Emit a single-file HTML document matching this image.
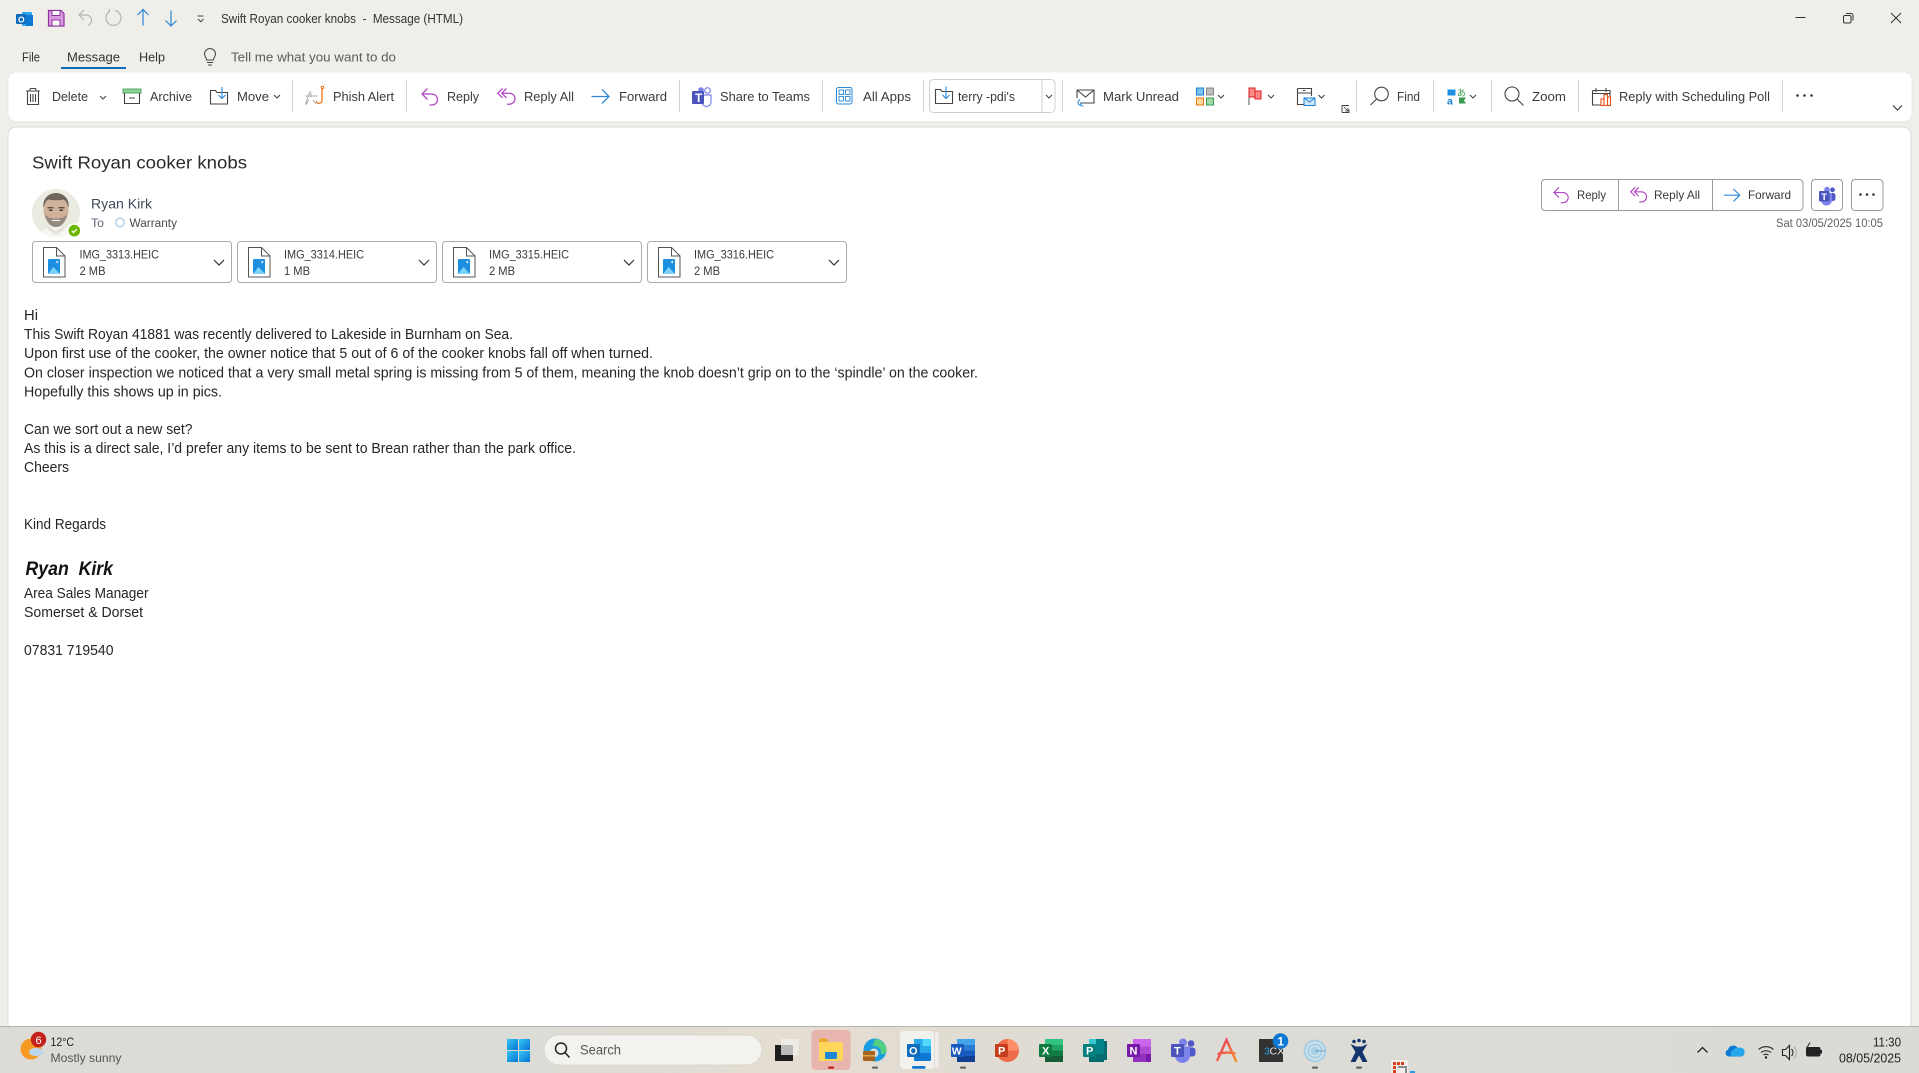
<!DOCTYPE html>
<html lang="en">
<head>
<meta charset="utf-8">
<title>Swift Royan cooker knobs - Message (HTML)</title>
<style>
html,body{margin:0;padding:0;width:1919px;height:1073px;overflow:hidden;background:#f0eee9}
svg{display:block;position:absolute;left:0;top:0}
text{font-family:"Liberation Sans",sans-serif;white-space:pre}
.t{font-size:12.5px;fill:#3a3a3a}
.m{font-size:12.5px;fill:#333}
.b{font-size:14.6px;fill:#262626}
.h{font-size:12px;fill:#3a3a3a}
.s{font-size:11.5px;fill:#4a4a4a}
.g{stroke:#d5d3ce;stroke-width:1}
.i{fill:none;stroke:#444;stroke-width:1.1}
.c{fill:none;stroke:#555;stroke-width:1.1}
</style>
</head>
<body>
<svg width="1919" height="1073" viewBox="0 0 1919 1073" xmlns="http://www.w3.org/2000/svg">
<defs>
<linearGradient id="tb" x1="0" x2="1" y1="0" y2="0">
<stop offset="0" stop-color="#dcdbd6"/><stop offset=".27" stop-color="#dcdcd6"/><stop offset=".42" stop-color="#e5ddd1"/><stop offset=".6" stop-color="#dcdbd5"/><stop offset="1" stop-color="#dbdbd6"/>
</linearGradient>
<linearGradient id="win" x1="0" x2="1" y1="0" y2="1"><stop offset="0" stop-color="#36c6f4"/><stop offset="1" stop-color="#0674d4"/></linearGradient>
<linearGradient id="acr" x1="0" x2="1" y1="0" y2="1"><stop offset="0" stop-color="#e8306a"/><stop offset="1" stop-color="#f79420"/></linearGradient>
<g id="rp" fill="none" stroke="#b146c2" stroke-width="1.25"><path d="M6.5 .5 1 6l5.500 5.500"/><path d="M1 6h10a5.500 5.500 0 0 1 0 11H8.500"/></g>
<g id="ra" fill="none" stroke="#b146c2" stroke-width="1.25"><path d="M5.500 .5 .8 5.200l4.700 4.700"/><path d="M9.500 .5 4.800 5.200l4.700 4.700"/><path d="M5 5.200h7.500a5.500 5.500 0 0 1 0 11H10"/></g>
<g id="fw" fill="none" stroke="#2b88d8" stroke-width="1.25"><path d="M.5 8h17.500"/><path d="M11 1l7 7-7 7"/></g>
<g id="tm"><circle cx="15.500" cy="3.500" r="2.800" fill="none" stroke="#7b83eb" stroke-width="1.200"/><path d="M10 8h9v7a4.500 4.500 0 0 1-9 0z" fill="none" stroke="#7b83eb" stroke-width="1.200"/><circle cx="9" cy="3" r="2.800" fill="#7b83eb"/><rect x="0" y="4" width="12" height="13" rx="1" fill="#4b53bc"/><text x="3" y="15" style="font:bold 12px 'Liberation Sans',sans-serif;fill:#fff">T</text></g>
<g id="tms"><circle cx="13.500" cy="2.800" r="2.400" fill="#5059c9"/><rect x="9" y="6" width="7.500" height="8" rx="2.500" fill="#5059c9"/><circle cx="8" cy="2.500" r="2.800" fill="#7b83eb"/><path d="M2 6h11v7a5.500 5.500 0 0 1-11 0z" fill="#7b83eb"/><rect x="0" y="4" width="10.500" height="10.500" rx="1" fill="#4b53bc"/><text x="2.300" y="12.800" style="font:bold 9.500px 'Liberation Sans',sans-serif;fill:#fff">T</text></g>
<g id="ch"><path d="M0 0l3 3 3-3" fill="none" stroke="#444" stroke-width="1.100"/></g>
<g id="file"><path d="M.5.500h13l8.500 8.500v21H.5z" fill="#fff" stroke="#555" stroke-width="1"/><path d="M13.500.5V9H22" fill="none" stroke="#555" stroke-width="1"/><rect x="5" y="12" width="12" height="15" rx="1" fill="#1d8fe1"/><path d="M5 27l5.500-7 6.500 7z" fill="#7fd3f7"/><path d="M13 15h2.500M14.200 13.800v2.500" stroke="#fff" stroke-width=".8"/></g>
</defs>

<!-- backdrop -->
<rect width="1919" height="1073" fill="#f0eee9"/>

<!-- title bar: quick access -->
<rect x="22" y="12" width="10" height="14" rx="1" fill="#28a8ea"/><rect x="26" y="15" width="7" height="11" fill="#0f78d4"/><rect x="16" y="14" width="10" height="10" rx="1" fill="#0f6cbd"/><text x="18" y="22.500" style="font:bold 8.500px 'Liberation Sans',sans-serif;fill:#fff">O</text>
<path d="M48.500 10.500H61l3 3v12.500H48.500z" fill="#d99be0" stroke="#8e2f9e" stroke-width="1.200"/><rect x="52" y="10.500" width="8" height="5" fill="#fff" stroke="#8e2f9e"/><rect x="52" y="20" width="8" height="6" fill="#fff" stroke="#8e2f9e"/>
<g fill="none" stroke="#b5b3ae" stroke-width="1.200"><path d="M84 10l-5 5 5 5"/><path d="M79 15h8a5.500 5.500 0 0 1 1 10.500"/><path d="M115 10.500a7.500 7.500 0 1 1-5.500 1l-.5-2.500"/></g>
<g fill="none" stroke="#2b88d8" stroke-width="1.200"><path d="M143 25.500V10"/><path d="M137.500 15l5.500-5.500 5.500 5.500"/><path d="M171 10.500V26"/><path d="M165.500 20.500l5.500 5.500 5.500-5.500"/></g>
<path d="M197.500 16h6" stroke="#444"/><path d="M198 19l2.800 2.800 2.800-2.800" fill="none" stroke="#444"/>
<text class="m" x="221" y="23" textLength="242" lengthAdjust="spacingAndGlyphs">Swift Royan cooker knobs  -  Message (HTML)</text>

<!-- window controls -->
<path d="M1795.500 17.500h10" stroke="#333" stroke-width="1"/>
<rect x="1843.500" y="15.500" width="7.500" height="7.500" rx="1.500" fill="none" stroke="#333"/><path d="M1846 13.500h5a2 2 0 0 1 2 2v5" fill="none" stroke="#333"/>
<path d="M1891 13l10 10M1901 13l-10 10" stroke="#333" stroke-width="1"/>

<!-- menu -->
<text class="m" x="22" y="61.500" textLength="18" lengthAdjust="spacingAndGlyphs">File</text>
<text class="m" x="67" y="61.500" textLength="53" lengthAdjust="spacingAndGlyphs">Message</text>
<rect x="61" y="67" width="65" height="2" fill="#0f6cbd"/>
<text class="m" x="139" y="61.500" textLength="26" lengthAdjust="spacingAndGlyphs">Help</text>
<path d="M206.500 60c0-2.500-2-3.500-2-6a5.500 5.500 0 0 1 11 0c0 2.500-2 3.500-2 6zM207 62.500h6M208 65h4" fill="none" stroke="#444" stroke-width="1"/>
<text class="t" x="231" y="61.500" textLength="165" lengthAdjust="spacingAndGlyphs" style="fill:#5c5c5c">Tell me what you want to do</text>

<!-- ribbon -->
<rect x="8" y="72" width="1904" height="49" rx="8" fill="#fff"/>
<rect x="8" y="72" width="1904" height="50" rx="8" fill="none" stroke="#e5e3de" stroke-width=".6"/>
<g class="g">
<path d="M292.500 80v32M406.500 80v32M679.500 80v32M822.500 80v32M923.500 80v32M1062.500 80v32M1356.500 80v32M1433.500 80v32M1491.500 80v32M1578.500 80v32M1782.500 80v32"/>
</g>

<!-- delete -->
<path d="M26 91h14M30 91v-1.500a1 1 0 0 1 1-1h4a1 1 0 0 1 1 1V91M27.500 91v13.500h11V91M30.500 94v8M33 94v8M35.500 94v8" class="i"/>
<text class="t" x="52" y="101" textLength="36" lengthAdjust="spacingAndGlyphs">Delete</text>
<use href="#ch" x="100" y="96"/>
<!-- archive -->
<rect x="123" y="89" width="18" height="4" fill="#8cd39a" stroke="#3a9a4f" stroke-width=".8"/>
<path d="M124.500 93v10.500h15V93M129 98h6" class="i"/>
<text class="t" x="150" y="101" textLength="42" lengthAdjust="spacingAndGlyphs">Archive</text>
<!-- move -->
<path d="M210.500 90.500h5l1.500 2h10.500v11.500h-17z" class="i"/><path d="M222 87v11M218.500 95l3.500 3.500 3.500-3.500" fill="none" stroke="#2b88d8" stroke-width="1.100"/>
<text class="t" x="237" y="101" textLength="32" lengthAdjust="spacingAndGlyphs">Move</text>
<use href="#ch" x="274" y="95"/>
<!-- phish -->
<g fill="none" stroke="#aaa" stroke-width="1"><path d="M305.500 104l3-9 2-4M305.500 96h12M309 100l-3.500 5M311 93v4M313 100l3 4"/></g>
<path d="M322 88.500v11a3 3 0 0 1-6 1.500" fill="none" stroke="#e8741c" stroke-width="1.300"/><circle cx="322.500" cy="87.500" r="1.300" fill="none" stroke="#e8741c"/>
<text class="t" x="333" y="101" textLength="61" lengthAdjust="spacingAndGlyphs">Phish Alert</text>
<!-- reply -->
<use href="#rp" x="421" y="88"/>
<text class="t" x="447" y="101" textLength="32" lengthAdjust="spacingAndGlyphs">Reply</text>
<use href="#ra" x="497" y="88"/>
<text class="t" x="524" y="101" textLength="50" lengthAdjust="spacingAndGlyphs">Reply All</text>
<use href="#fw" x="591" y="88.500"/>
<text class="t" x="619" y="101" textLength="48" lengthAdjust="spacingAndGlyphs">Forward</text>
<!-- teams -->
<use href="#tm" x="692" y="87"/>
<text class="t" x="720" y="101" textLength="90" lengthAdjust="spacingAndGlyphs">Share to Teams</text>
<!-- all apps -->
<rect x="836.500" y="87.500" width="15.500" height="16.500" rx="2" fill="none" stroke="#2b88d8"/>
<g fill="none" stroke="#2b88d8" stroke-width=".9"><rect x="839" y="90" width="4.500" height="4.500"/><rect x="845.500" y="90" width="4.500" height="4.500"/><rect x="839" y="96.500" width="4.500" height="4.500"/><rect x="845.500" y="96.500" width="4.500" height="4.500"/></g>
<text class="t" x="863" y="101" textLength="48" lengthAdjust="spacingAndGlyphs">All Apps</text>
<!-- quick step combo -->
<rect x="929.500" y="79.500" width="125.500" height="33" rx="4" fill="#fff" stroke="#cfcfcf"/>
<path d="M1042 80v32" stroke="#cfcfcf"/>
<path d="M935.500 89.500h5l1.500 2h10.500v12h-17z" class="i"/><path d="M946 86.500v12M942.500 95l3.500 3.500 3.500-3.500" fill="none" stroke="#2b88d8" stroke-width="1.100"/>
<text class="t" x="958" y="101" textLength="57" lengthAdjust="spacingAndGlyphs">terry -pdi's</text>
<use href="#ch" x="1046" y="95"/>
<!-- mark unread -->
<path d="M1077 90h17v13h-14M1077 90v8M1077 90l8.500 7 8.500-7" class="i"/><path d="M1080 99.500a3.500 3.500 0 0 0-1 5.500l2 0M1081.500 102.500l-1 2.800 2.800 1" fill="none" stroke="#2b88d8" stroke-width="1"/>
<text class="t" x="1103" y="101" textLength="76" lengthAdjust="spacingAndGlyphs">Mark Unread</text>
<!-- categorize -->
<rect x="1196.500" y="88" width="7" height="7" fill="#7cc0ee" stroke="#1a7fd0"/><rect x="1206.500" y="88" width="7" height="7" fill="#bdbdbd" stroke="#888"/><rect x="1196.500" y="98" width="7" height="7" fill="#fdd79b" stroke="#e07a10"/><rect x="1206.500" y="98" width="7" height="7" fill="#a0dca8" stroke="#3a9a4f"/>
<use href="#ch" x="1218" y="95"/>
<!-- flag -->
<path d="M1249 87.500v17.500" stroke="#555"/><rect x="1249" y="88" width="6" height="9" fill="#f98b8b" stroke="#e01b1b"/><rect x="1255" y="91" width="6" height="8" fill="#f98b8b" stroke="#e01b1b"/>
<use href="#ch" x="1268" y="95"/>
<!-- rules -->
<path d="M1297.500 88.500h14v7.500M1297.500 88.500v16h6" class="i"/><path d="M1297.500 93h14M1303 90.500h2.500" class="i"/><rect x="1304" y="98" width="11" height="7.500" fill="#cfe8f8" stroke="#1a7fd0"/><path d="M1304 98l5.500 4 5.500-4" fill="none" stroke="#1a7fd0"/>
<use href="#ch" x="1318.500" y="95"/>
<!-- launcher -->
<path d="M1342 112.500V105.500h7M1342 112.500h7v-3" fill="none" stroke="#444"/><path d="M1344 107l4 4M1345 111h3v-3" fill="none" stroke="#444" stroke-width=".8"/>
<!-- find -->
<circle cx="1381.500" cy="94" r="6.800" class="i"/><path d="M1376.500 99l-6 6" class="i"/>
<text class="t" x="1397" y="101" textLength="23" lengthAdjust="spacingAndGlyphs">Find</text>
<!-- translate -->
<path d="M1447.500 89.500h8v6h-8z" fill="#1d8fe1"/><path d="M1459 97.500h7l-2 3 2 3h-7z" fill="#3a9a4f"/>
<text x="1447" y="104.500" style="font:bold 10.500px 'Liberation Sans',sans-serif;fill:#1a7fd0">a</text>
<text x="1457" y="96" style="font:9px 'Noto Sans CJK JP','Liberation Sans',sans-serif;fill:#3a9a4f">あ</text>
<use href="#ch" x="1470" y="95"/>
<!-- zoom -->
<circle cx="1512" cy="94" r="7" class="i"/><path d="M1517 99l6.500 6.500" class="i"/>
<text class="t" x="1532" y="101" textLength="34" lengthAdjust="spacingAndGlyphs">Zoom</text>
<!-- poll -->
<path d="M1592.500 90.500h17.500v6M1592.500 90.500v14.500h8M1592.500 93.500h17.500M1596 88v4M1606 88v4" class="i"/>
<g fill="none" stroke="#e8501c" stroke-width="1.100"><rect x="1601" y="99" width="3" height="6.500"/><rect x="1604" y="94.500" width="3.500" height="11"/><rect x="1607.500" y="97" width="3" height="8.500"/></g>
<text class="t" x="1619" y="101" textLength="151" lengthAdjust="spacingAndGlyphs">Reply with Scheduling Poll</text>
<circle cx="1797.500" cy="95.500" r="1.300" fill="#333"/><circle cx="1804.500" cy="95.500" r="1.300" fill="#333"/><circle cx="1811.500" cy="95.500" r="1.300" fill="#333"/>
<path d="M1893 105.500l4.500 4.500 4.500-4.500" fill="none" stroke="#333" stroke-width="1.100"/>

<!-- reading pane -->
<path d="M8 1030V135a8 8 0 0 1 8-8h1887a8 8 0 0 1 8 8v895z" fill="#fff" stroke="#dcdad5" stroke-width="1"/>

<text x="32" y="168.500" style="font-size:17.500px;fill:#2a2a2a" textLength="215" lengthAdjust="spacingAndGlyphs">Swift Royan cooker knobs</text>

<!-- avatar -->
<clipPath id="av"><circle cx="56" cy="213" r="24"/></clipPath>
<g clip-path="url(#av)">
<rect x="32" y="189" width="48" height="48" fill="#ecebe1"/>
<path d="M36 242c1-12 10-14 20-15s19 3 20 15z" fill="#f7f6f2"/>
<path d="M48 226l8 5 8-5v4l-8 5-8-5z" fill="#e4e2da"/>
<ellipse cx="56" cy="210" rx="12.500" ry="16" fill="#cfb19c"/>
<path d="M43.500 208c-1.500-9 5-15 12.500-15s14 6 12.500 15c-1-5-3-7.500-5-8.500-4 1-10 1-15 0-2 1-4 3.500-5 8.500z" fill="#6e655c"/>
<path d="M45 214c1.500 9 6 13 11 13s9.500-4 11-13c-2 3-5 4.500-11 4.500s-9-1.500-11-4.500z" fill="#948a80"/>
<rect x="47.500" y="207" width="6" height="1.400" fill="#5e5148"/><rect x="58.500" y="207" width="6" height="1.400" fill="#5e5148"/>
<rect x="49" y="209.500" width="3.500" height="1.500" fill="#4a4039"/><rect x="59.500" y="209.500" width="3.500" height="1.500" fill="#4a4039"/>
<path d="M52 220.500h8" stroke="#f2ece6" stroke-width="1.300"/>
</g>
<circle cx="74.300" cy="230.700" r="7.500" fill="#fff"/><circle cx="74.300" cy="230.700" r="5.800" fill="#6bb700"/><path d="M71.800 230.800l1.800 1.800 3.200-3.400" fill="none" stroke="#fff" stroke-width="1.300"/>
<text x="91" y="208.500" style="font-size:14px;fill:#3d4a5a" textLength="61" lengthAdjust="spacingAndGlyphs">Ryan Kirk</text>
<text class="s" x="91" y="227" textLength="13" lengthAdjust="spacingAndGlyphs" style="fill:#5a6472">To</text>
<circle cx="120" cy="222.500" r="4.300" fill="none" stroke="#9ec3dd" stroke-width="1.100"/>
<text class="s" x="129.500" y="227" textLength="47.500" lengthAdjust="spacingAndGlyphs">Warranty</text>

<!-- header action buttons -->
<rect x="1541.500" y="179.500" width="261.500" height="31" rx="3.500" fill="#fff" stroke="#9b9b9b"/>
<path d="M1618.500 180v30M1712.500 180v30" stroke="#9b9b9b"/>
<use href="#rp" transform="translate(1553 187) scale(.92)"/>
<text class="h" x="1577" y="199" textLength="29" lengthAdjust="spacingAndGlyphs">Reply</text>
<use href="#ra" transform="translate(1630 187) scale(.92)"/>
<text class="h" x="1654" y="199" textLength="46" lengthAdjust="spacingAndGlyphs">Reply All</text>
<use href="#fw" transform="translate(1723.500 188) scale(.9)"/>
<text class="h" x="1748" y="199" textLength="43" lengthAdjust="spacingAndGlyphs">Forward</text>
<rect x="1811.500" y="179.500" width="31" height="31" rx="3.500" fill="#fff" stroke="#9b9b9b"/>
<use href="#tms" x="1819" y="187"/>
<rect x="1851.500" y="179.500" width="31.500" height="31" rx="3.500" fill="#fff" stroke="#9b9b9b"/>
<circle cx="1860.500" cy="194.500" r="1.300" fill="#333"/><circle cx="1867" cy="194.500" r="1.300" fill="#333"/><circle cx="1873.500" cy="194.500" r="1.300" fill="#333"/>
<text class="s" x="1776" y="227" textLength="107" lengthAdjust="spacingAndGlyphs" style="fill:#616161">Sat 03/05/2025 10:05</text>

<!-- attachments -->
<g>
<rect x="32.500" y="241.500" width="199" height="41" rx="3" fill="#fff" stroke="#ababab"/>
<use href="#file" x="43" y="247"/>
<text class="s" x="79.500" y="258.500" textLength="79.500" lengthAdjust="spacingAndGlyphs" style="fill:#3a3a3a">IMG_3313.HEIC</text>
<text class="s" x="79.500" y="275" textLength="26" lengthAdjust="spacingAndGlyphs" style="fill:#3a3a3a">2 MB</text>
<path d="M214 260l5 5 5-5" fill="none" stroke="#333" stroke-width="1.200"/>
</g>
<g>
<rect x="237.500" y="241.500" width="199" height="41" rx="3" fill="#fff" stroke="#ababab"/>
<use href="#file" x="248" y="247"/>
<text class="s" x="284" y="258.500" textLength="80" lengthAdjust="spacingAndGlyphs" style="fill:#3a3a3a">IMG_3314.HEIC</text>
<text class="s" x="284" y="275" textLength="26" lengthAdjust="spacingAndGlyphs" style="fill:#3a3a3a">1 MB</text>
<path d="M419 260l5 5 5-5" fill="none" stroke="#333" stroke-width="1.200"/>
</g>
<g>
<rect x="442.500" y="241.500" width="199" height="41" rx="3" fill="#fff" stroke="#ababab"/>
<use href="#file" x="453" y="247"/>
<text class="s" x="489" y="258.500" textLength="80" lengthAdjust="spacingAndGlyphs" style="fill:#3a3a3a">IMG_3315.HEIC</text>
<text class="s" x="489" y="275" textLength="26" lengthAdjust="spacingAndGlyphs" style="fill:#3a3a3a">2 MB</text>
<path d="M624 260l5 5 5-5" fill="none" stroke="#333" stroke-width="1.200"/>
</g>
<g>
<rect x="647.500" y="241.500" width="199" height="41" rx="3" fill="#fff" stroke="#ababab"/>
<use href="#file" x="658" y="247"/>
<text class="s" x="694" y="258.500" textLength="80" lengthAdjust="spacingAndGlyphs" style="fill:#3a3a3a">IMG_3316.HEIC</text>
<text class="s" x="694" y="275" textLength="26" lengthAdjust="spacingAndGlyphs" style="fill:#3a3a3a">2 MB</text>
<path d="M829 260l5 5 5-5" fill="none" stroke="#333" stroke-width="1.200"/>
</g>

<!-- body -->
<text class="b" x="24" y="320" textLength="14" lengthAdjust="spacingAndGlyphs">Hi</text>
<text class="b" x="24" y="339" textLength="489" lengthAdjust="spacingAndGlyphs">This Swift Royan 41881 was recently delivered to Lakeside in Burnham on Sea.</text>
<text class="b" x="24" y="358" textLength="629" lengthAdjust="spacingAndGlyphs">Upon first use of the cooker, the owner notice that 5 out of 6 of the cooker knobs fall off when turned.</text>
<text class="b" x="24" y="377.500" textLength="954" lengthAdjust="spacingAndGlyphs">On closer inspection we noticed that a very small metal spring is missing from 5 of them, meaning the knob doesn’t grip on to the ‘spindle’ on the cooker.</text>
<text class="b" x="24" y="396.500" textLength="198" lengthAdjust="spacingAndGlyphs">Hopefully this shows up in pics.</text>
<text class="b" x="24" y="434" textLength="168.500" lengthAdjust="spacingAndGlyphs">Can we sort out a new set?</text>
<text class="b" x="24" y="453" textLength="552" lengthAdjust="spacingAndGlyphs">As this is a direct sale, I’d prefer any items to be sent to Brean rather than the park office.</text>
<text class="b" x="24" y="472" textLength="45" lengthAdjust="spacingAndGlyphs">Cheers</text>
<text class="b" x="24" y="529" textLength="82" lengthAdjust="spacingAndGlyphs">Kind Regards</text>
<text x="25.500" y="575" textLength="87.500" lengthAdjust="spacingAndGlyphs" style="font:italic bold 19px 'Liberation Sans',sans-serif;fill:#111">Ryan  Kirk</text>
<text class="b" x="24" y="598" textLength="124.500" lengthAdjust="spacingAndGlyphs">Area Sales Manager</text>
<text class="b" x="24" y="617" textLength="119" lengthAdjust="spacingAndGlyphs">Somerset &amp; Dorset</text>
<text class="b" x="24" y="655" textLength="89.500" lengthAdjust="spacingAndGlyphs">07831 719540</text>

<!-- taskbar -->
<rect x="0" y="1026" width="1919" height="47" fill="url(#tb)"/>
<rect x="0" y="1026" width="1919" height="1" fill="#b5b4af"/>

<!-- weather -->
<circle cx="31" cy="1049" r="10.500" fill="#f59a23"/>
<ellipse cx="36" cy="1052" rx="7" ry="4" fill="#bcd6ee"/>
<circle cx="38.500" cy="1039.500" r="7.700" fill="#c4211d"/>
<text x="35.500" y="1043.800" style="font:11px 'Liberation Sans',sans-serif;fill:#fff">6</text>
<text x="50.500" y="1046" style="font-size:12px;fill:#222" textLength="23.500" lengthAdjust="spacingAndGlyphs">12°C</text>
<text x="50.500" y="1062" style="font-size:12px;fill:#555" textLength="71" lengthAdjust="spacingAndGlyphs">Mostly sunny</text>

<!-- start -->
<g fill="url(#win)"><rect x="507" y="1039" width="11" height="11"/><rect x="519" y="1039" width="11" height="11"/><rect x="507" y="1051" width="11" height="11"/><rect x="519" y="1051" width="11" height="11"/></g>
<!-- search -->
<rect x="544" y="1035" width="218" height="30" rx="15" fill="#f4f2ee" stroke="#d8d6d0"/>
<circle cx="561" cy="1048.500" r="5.500" fill="none" stroke="#222" stroke-width="1.500"/><path d="M565 1052.500l4.500 5" stroke="#222" stroke-width="1.500"/>
<text x="580" y="1054.500" style="font-size:13.500px;fill:#555" textLength="41" lengthAdjust="spacingAndGlyphs">Search</text>
<!-- task view -->
<rect x="775" y="1045" width="18" height="16" fill="#1e1e1e"/>
<rect x="781" y="1039" width="17.500" height="16" fill="#efefec" fill-opacity=".75"/>

<!-- explorer -->
<rect x="811.500" y="1030" width="39" height="40" rx="4" fill="#e8b5ae"/>
<path d="M819 1042v-2a1.500 1.500 0 0 1 1.500-1.500h6l2 3z" fill="#e8a820"/>
<rect x="819" y="1042" width="24" height="19" rx="1.500" fill="#ffd65c"/>
<rect x="825" y="1052" width="12" height="7" rx="1" fill="#1f87d6"/>
<rect x="828" y="1066.500" width="6" height="2.200" rx="1" fill="#c4211d"/>
<!-- edge -->
<circle cx="875" cy="1050" r="11.500" fill="#1b9de2"/>
<path d="M875 1039a11.500 11.500 0 0 1 11.500 11c0 3-3 5-6 4 2-5-3-9-8-8z" fill="#51d17f"/>
<circle cx="874" cy="1053" r="4.500" fill="#dcdcd6"/>
<rect x="863" y="1051" width="12" height="10" rx="1" fill="#a66320"/><rect x="863" y="1055" width="12" height="1.500" fill="#e3a645"/>
<rect x="872" y="1066.500" width="6" height="2.200" rx="1" fill="#666"/>
<!-- outlook -->
<rect x="935" y="1032" width="3.500" height="36" rx="1.500" fill="#efeeea"/>
<rect x="900" y="1031" width="34" height="38" rx="4" fill="#f3f1ed"/>
<rect x="914" y="1039" width="17" height="22" rx="1" fill="#0f78d4"/><rect x="914" y="1039" width="8.500" height="7" fill="#28a8ea"/><rect x="922.500" y="1039" width="8.500" height="7" fill="#50d9ff"/><rect x="914" y="1046" width="17" height="7" fill="#28a8ea"/>
<rect x="907" y="1044" width="13" height="13" rx="1" fill="#0f6cbd"/>
<text x="909" y="1054.500" style="font:bold 11px 'Liberation Sans',sans-serif;fill:#fff">O</text>
<rect x="912" y="1066" width="13.500" height="2.800" rx="1.200" fill="#0f78d4"/>
<!-- word -->
<rect x="957" y="1039" width="18" height="6" fill="#41a5ee"/><rect x="957" y="1045" width="18" height="5.500" fill="#2b7cd3"/><rect x="957" y="1050.500" width="18" height="5.500" fill="#185abd"/><rect x="957" y="1056" width="18" height="6" fill="#103f91"/>
<rect x="951" y="1044" width="13" height="13" rx="1" fill="#185abd"/>
<text x="951.800" y="1054.500" style="font:bold 10.500px 'Liberation Sans',sans-serif;fill:#fff">W</text>
<rect x="960" y="1066.500" width="6" height="2.200" rx="1" fill="#666"/>
<!-- powerpoint -->
<circle cx="1007.500" cy="1050.500" r="11.500" fill="#ed6c47"/><path d="M1007.500 1039a11.500 11.500 0 0 1 11.500 11.500h-11.500z" fill="#ff8f6b"/>
<rect x="995" y="1044" width="13" height="13" rx="1" fill="#c43e1c"/>
<text x="998" y="1054.500" style="font:bold 11px 'Liberation Sans',sans-serif;fill:#fff">P</text>
<!-- excel -->
<rect x="1045" y="1039" width="18" height="6" fill="#33c481"/><rect x="1045" y="1045" width="18" height="5.500" fill="#21a366"/><rect x="1045" y="1050.500" width="18" height="5.500" fill="#107c41"/><rect x="1045" y="1056" width="18" height="6" fill="#185c37"/>
<rect x="1039" y="1044" width="13" height="13" rx="1" fill="#107c41"/>
<text x="1042" y="1054.500" style="font:bold 11px 'Liberation Sans',sans-serif;fill:#fff">X</text>
<!-- publisher -->
<rect x="1089" y="1039" width="15" height="23" fill="#37c6d0"/><rect x="1096" y="1039" width="8" height="23" fill="#038387"/><rect x="1104" y="1041" width="3" height="19" fill="#036c70"/><rect x="1089" y="1054" width="15" height="8" fill="#036c70"/>
<rect x="1083" y="1044" width="13" height="13" rx="1" fill="#077f7f"/>
<text x="1086" y="1054.500" style="font:bold 11px 'Liberation Sans',sans-serif;fill:#fff">P</text>
<!-- onenote -->
<rect x="1133" y="1039" width="18" height="7.500" fill="#ca64ea"/><rect x="1133" y="1046.500" width="18" height="7.500" fill="#ae4bd5"/><rect x="1133" y="1054" width="18" height="8" fill="#9332bf"/><rect x="1146" y="1054" width="5" height="8" fill="#7719aa"/>
<rect x="1127" y="1044" width="13" height="13" rx="1" fill="#7719aa"/>
<text x="1129.500" y="1054.500" style="font:bold 11px 'Liberation Sans',sans-serif;fill:#fff">N</text>
<!-- teams task -->
<circle cx="1191" cy="1043.500" r="3.300" fill="#5059c9"/><rect x="1186" y="1047.500" width="9.500" height="9" rx="3" fill="#5059c9"/>
<circle cx="1183" cy="1042.500" r="4" fill="#7b83eb"/><path d="M1175 1046.500h15v9a7.500 7.500 0 0 1-15 0z" fill="#7b83eb"/>
<rect x="1171" y="1044" width="13" height="13" rx="1" fill="#4b53bc"/>
<text x="1174" y="1054.500" style="font:bold 11px 'Liberation Sans',sans-serif;fill:#fff">T</text>
<!-- acrobat-like -->
<path d="M1217 1061l9.500-21 10 22M1217.500 1054c6-1.500 12-2 18-.5" fill="none" stroke="url(#acr)" stroke-width="2.400"/>
<!-- 3cx -->
<rect x="1259" y="1039" width="24" height="23" fill="#333"/>
<text x="1264" y="1054.500" style="font:10.500px 'Liberation Sans',sans-serif;fill:#2b9be0">3</text>
<text x="1269.500" y="1054.500" style="font:10.500px 'Liberation Sans',sans-serif;fill:#e8e8e8">CX</text>
<circle cx="1280.500" cy="1041" r="7.800" fill="#0f78d4"/>
<text x="1277.500" y="1045.500" style="font:bold 11.500px 'Liberation Sans',sans-serif;fill:#fff">1</text>
<!-- globe -->
<circle cx="1315" cy="1051" r="11.500" fill="#a9cfe2"/>
<circle cx="1315" cy="1051" r="8.500" fill="none" stroke="#dbeaf0" stroke-width="1.200"/>
<circle cx="1315" cy="1051" r="5" fill="none" stroke="#dbeaf0" stroke-width="1"/>
<path d="M1315 1051h10" stroke="#6f9fc0"/>
<rect x="1312" y="1066.500" width="6" height="2.200" rx="1" fill="#666"/>
<!-- jira-like -->
<circle cx="1354" cy="1041.500" r="1.800" fill="#12356d"/><circle cx="1359" cy="1040.500" r="1.800" fill="#12356d"/><circle cx="1364" cy="1041.500" r="1.800" fill="#12356d"/>
<path d="M1350.500 1044l5.500 2.500h6l5.500-2.500-5 8 5 10h-5l-3.500-6.500-3.500 6.500h-5l5-10z" fill="#12356d"/>
<rect x="1356" y="1066.500" width="6" height="2.200" rx="1" fill="#666"/>
<!-- corner thumbnail -->
<rect x="1391" y="1060" width="17" height="13" fill="#efeeea"/>
<rect x="1393" y="1062" width="3" height="3" fill="#d8411c"/><rect x="1397" y="1062" width="3" height="3" fill="#d8411c"/><rect x="1401" y="1062" width="3" height="3" fill="#d8411c"/>
<rect x="1393" y="1066" width="3" height="3" fill="#d8411c"/><rect x="1393" y="1070" width="3" height="3" fill="#d8411c"/>
<path d="M1398 1067h8v6" fill="none" stroke="#8b8b8b" stroke-width="2"/>
<rect x="1410" y="1071" width="5" height="2" fill="#2b9be0"/>

<!-- tray -->
<path d="M1697.500 1052.500l5-5 5 5" fill="none" stroke="#222" stroke-width="1.300"/>
<path d="M1729 1056.500a3.500 3.500 0 0 1-1-6.800 5.500 5.500 0 0 1 10-1.500 4.200 4.200 0 0 1 4 8.300z" fill="#0f78d4"/>
<path d="M1733 1050a5 5 0 0 1 5-2 4.200 4.200 0 0 1 4 8.300h-10c-2 0-2-4 1-6.300z" fill="#28a8ea"/>
<g fill="none" stroke="#222" stroke-width="1.100"><path d="M1758.500 1049.500a11.500 11.500 0 0 1 15 0"/><path d="M1761 1052.500a8 8 0 0 1 10 0"/><path d="M1763.500 1055a4.500 4.500 0 0 1 5 0"/></g><circle cx="1766" cy="1057.500" r="1.200" fill="#222"/>
<path d="M1782.500 1049.500h3l4-4v14l-4-4h-3z" fill="none" stroke="#222" stroke-width="1.100"/><path d="M1791.500 1049a5 5 0 0 1 0 7" fill="none" stroke="#222"/><path d="M1794 1046.500a9 9 0 0 1 0 12" fill="none" stroke="#aaa"/>
<rect x="1806.500" y="1047.500" width="13.500" height="8.500" rx="1.500" fill="#222" stroke="#222"/><rect x="1820.500" y="1050" width="1.500" height="3.500" fill="#222"/><path d="M1810 1042.500l-3 5h3l-2 4" fill="none" stroke="#222" stroke-width="1"/>
<text x="1873" y="1046.500" style="font-size:12.500px;fill:#222" textLength="28" lengthAdjust="spacingAndGlyphs">11:30</text>
<text x="1839" y="1062.500" style="font-size:12.500px;fill:#222" textLength="62" lengthAdjust="spacingAndGlyphs">08/05/2025</text>
</svg>
</body>
</html>
